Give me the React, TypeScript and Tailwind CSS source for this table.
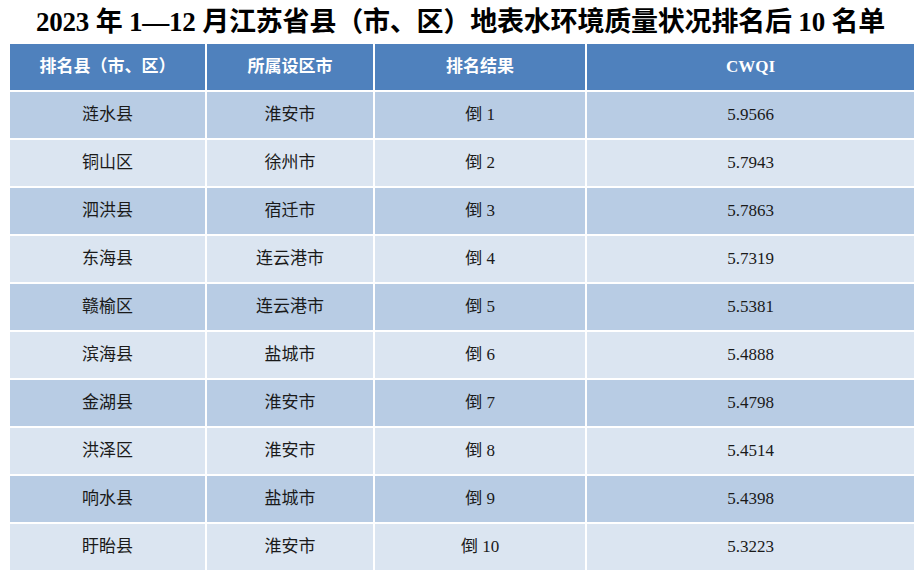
const ROWS = [
  { county: '涟水县', city: '淮安市', rank: 1, cwqi: '5.9566' },
  { county: '铜山区', city: '徐州市', rank: 2, cwqi: '5.7943' },
  { county: '泗洪县', city: '宿迁市', rank: 3, cwqi: '5.7863' },
  { county: '东海县', city: '连云港市', rank: 4, cwqi: '5.7319' },
  { county: '赣榆区', city: '连云港市', rank: 5, cwqi: '5.5381' },
  { county: '滨海县', city: '盐城市', rank: 6, cwqi: '5.4888' },
  { county: '金湖县', city: '淮安市', rank: 7, cwqi: '5.4798' },
  { county: '洪泽区', city: '淮安市', rank: 8, cwqi: '5.4514' },
  { county: '响水县', city: '盐城市', rank: 9, cwqi: '5.4398' },
  { county: '盱眙县', city: '淮安市', rank: 10, cwqi: '5.3223' },
]

const HEADERS = ['排名县（市、区）', '所属设区市', '排名结果', 'CWQI']

export default function App() {
  return (
    <div className="w-[921px] h-[582px] bg-white font-['Liberation_Serif','Noto_Sans_CJK_SC',serif] text-[#1a1a1a]">
      {/* Title */}
      <h1 className="h-[44px] pt-[4px] text-center text-[27px] font-bold leading-[36px] tracking-[-0.2px] text-black">
        2023 年 1—12 月江苏省县（市、区）地表水环境质量状况排名后 10 名单
      </h1>

      {/* Table */}
      <div className="ml-[10px] w-[902px] grid grid-cols-[195px_166px_210px_327px] gap-[2px] bg-white">
        {HEADERS.map((h) => (
          <div
            key={h}
            className="h-[46px] flex items-center justify-center bg-[#4f81bd] text-white font-bold text-[17px] font-['Liberation_Serif','Noto_Sans_CJK_SC',sans-serif]"
          >
            {h}
          </div>
        ))}

        {ROWS.map((r, i) => {
          const bg = i % 2 === 0 ? 'bg-[#b8cce4]' : 'bg-[#dbe5f1]'
          return [
            <div key={`a${i}`} className={`h-[46px] flex items-center justify-center text-[17px] ${bg}`}>
              {r.county}
            </div>,
            <div key={`b${i}`} className={`h-[46px] flex items-center justify-center text-[17px] ${bg}`}>
              {r.city}
            </div>,
            <div key={`c${i}`} className={`h-[46px] flex items-center justify-center text-[17px] ${bg}`}>
              倒 {r.rank}
            </div>,
            <div key={`d${i}`} className={`h-[46px] flex items-center justify-center text-[17px] ${bg}`}>
              {r.cwqi}
            </div>,
          ]
        })}
      </div>
    </div>
  )
}
